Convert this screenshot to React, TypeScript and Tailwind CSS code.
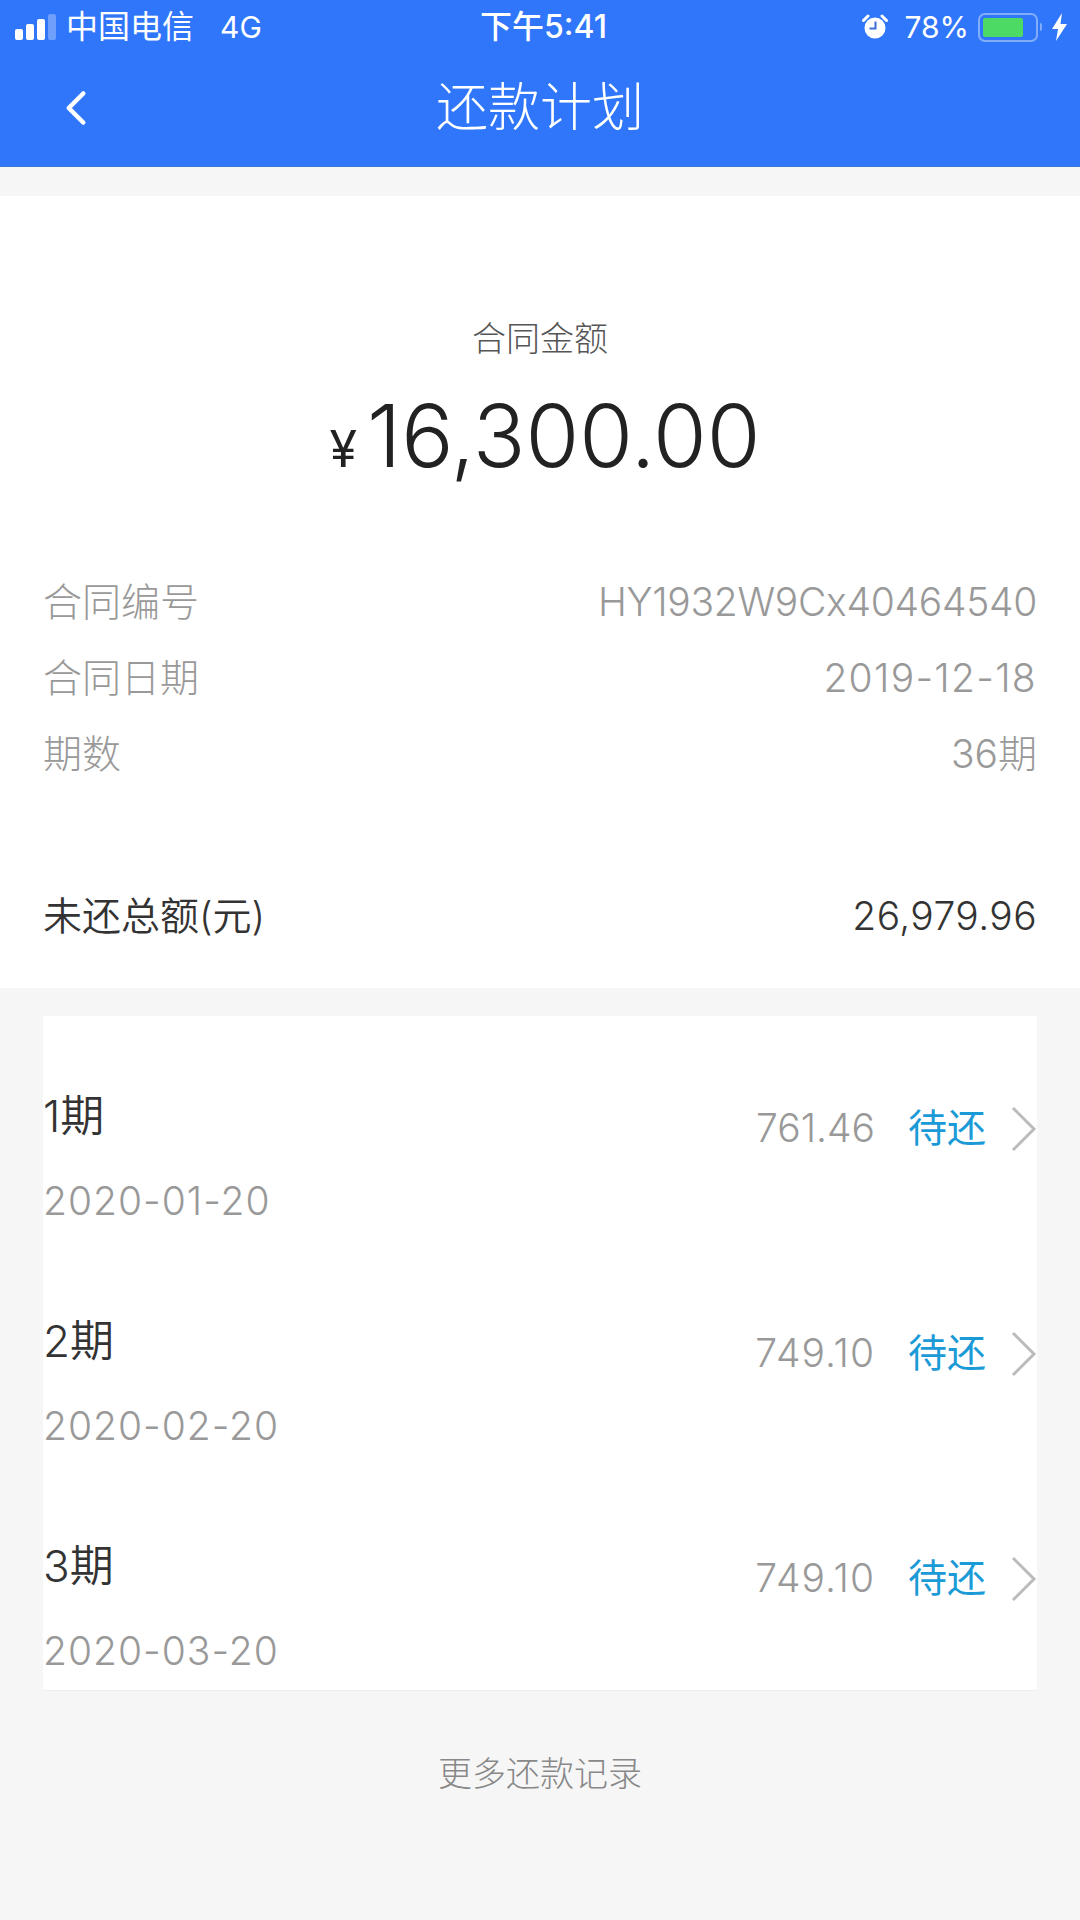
import { ChevronLeft } from 'lucide-react';

const font = "font-['Inter','Noto_Sans_CJK_SC',sans-serif]";

const infoRows = [
  { label: '合同编号', value: 'HY1932W9Cx40464540', valueClass: 'tracking-[-0.3px]' },
  { label: '合同日期', value: '2019-12-18', valueClass: 'tracking-[1.3px]' },
  { label: '期数', value: '36期', valueClass: '' },
];

const plans = [
  { term: '1期', date: '2020-01-20', amount: '761.46', amountClass: '' },
  { term: '2期', date: '2020-02-20', amount: '749.10', amountClass: 'tracking-[1px]' },
  { term: '3期', date: '2020-03-20', amount: '749.10', amountClass: 'tracking-[1px]' },
];

function StatusBar() {
  return (
    <div className="flex h-[54px] items-center justify-between pl-[15px] pr-[12px] text-[32px] text-white">
      <div className="flex w-[400px] items-center">
        <div className="flex h-[26px] items-end gap-[3px]">
          <span className="h-[11px] w-[8px] rounded-[2px] bg-white" />
          <span className="h-[16px] w-[8px] rounded-[2px] bg-white" />
          <span className="h-[21px] w-[8px] rounded-[2px] bg-white" />
          <span className="h-[26px] w-[8px] rounded-[2px] bg-white/30" />
        </div>
        <span className="ml-[10px]">中国电信</span>
        <span className="ml-[26px] text-[30px]">4G</span>
      </div>
      <span className="pl-[4px] text-[32px] font-medium">下午5:41</span>
      <div className="flex w-[400px] items-center justify-end">
        <svg width="26" height="26" viewBox="0 0 26 26">
          <circle cx="13" cy="14" r="10.500" fill="#fff" />
          <path d="M1.500 6.500 6 2M24.500 6.500 20 2" stroke="#fff" strokeWidth="3" strokeLinecap="round" />
          <path d="M13.500 7.500v7H7.500" stroke="#3b6fd8" strokeWidth="2" fill="none" />
        </svg>
        <span className="ml-[16px] text-[30px]">78%</span>
        <div className="ml-[9px] h-[29px] w-[60px] rounded-[7px] border-2 border-white/40 p-[3px]">
          <div className="h-full w-[40px] rounded-[2px] bg-[#4cd964]" />
        </div>
        <span className="ml-[2px] h-[8px] w-[2px] rounded-r-full bg-white/40" />
        <svg className="ml-[9px]" width="17" height="28" viewBox="0 0 17 28">
          <path d="M11 0 1 16h6l-2 12L16 11H9.500z" fill="#fff" />
        </svg>
      </div>
    </div>
  );
}

export default function App() {
  return (
    <div className={`flex h-[1920px] w-[1080px] flex-col bg-[#f6f6f6] ${font}`}>
      <header className="h-[167px] border-b border-[#3d78d8] bg-[#2f76fa]">
        <StatusBar />
        <div className="relative flex h-[108px] items-center justify-center">
          <ChevronLeft className="absolute left-[47px] top-[25px] size-[58px] text-white" strokeWidth={1.9} />
          <h1 className="text-[52px] font-light text-white">还款计划</h1>
        </div>
      </header>

      <section className="mt-[29px] h-[792px] bg-white px-[43px]">
        <p className="mt-[121px] text-center text-[34px] font-light leading-[44px] text-[#555]">合同金额</p>
        <p className="mt-[20px] flex items-baseline justify-center pl-[10px] leading-[110px] text-[#222]">
          <span className="mr-[10px] text-[50px]">¥</span>
          <span className="text-[87px] font-[350]">16,300.00</span>
        </p>
        <div className="mt-[60px] flex flex-col">
          {infoRows.map((row) => (
            <div key={row.label} className="flex h-[76px] items-center justify-between text-[39px] text-[#999]">
              <span className="font-light">{row.label}</span>
              <span className={`font-light ${row.valueClass}`}>{row.value}</span>
            </div>
          ))}
        </div>
        <div className="mt-[100px] flex items-center justify-between text-[39px] font-[350] leading-[48px] text-[#333]">
          <span>未还总额(元)</span>
          <span className="tracking-[0.4px]">26,979.96</span>
        </div>
      </section>

      <section className="mx-[43px] mt-[28px] h-[675px] border-b border-[#eeeeee] bg-white">
        {plans.map((plan) => (
          <div key={plan.term} className="flex h-[225px] items-center justify-between">
            <div className="pt-[56px]">
              <p className="text-[44px] font-[350] leading-[56px] text-[#333]">{plan.term}</p>
              <p className="mt-[33px] text-[39px] font-light leading-[48px] tracking-[1px] text-[#999]">{plan.date}</p>
            </div>
            <div className="flex items-center text-[39px]">
              <span className={`font-light text-[#999] ${plan.amountClass}`}>{plan.amount}</span>
              <span className="ml-[33px] text-[#1a9ad6]">待还</span>
              <svg className="ml-[25px]" width="26" height="46" viewBox="0 0 26 46">
                <path d="M2 2l21 21L2 44" fill="none" stroke="#bbb" strokeWidth="3" />
              </svg>
            </div>
          </div>
        ))}
      </section>

      <p className="mt-[61px] text-center text-[34px] font-light leading-[44px] text-[#888]">更多还款记录</p>
    </div>
  );
}
